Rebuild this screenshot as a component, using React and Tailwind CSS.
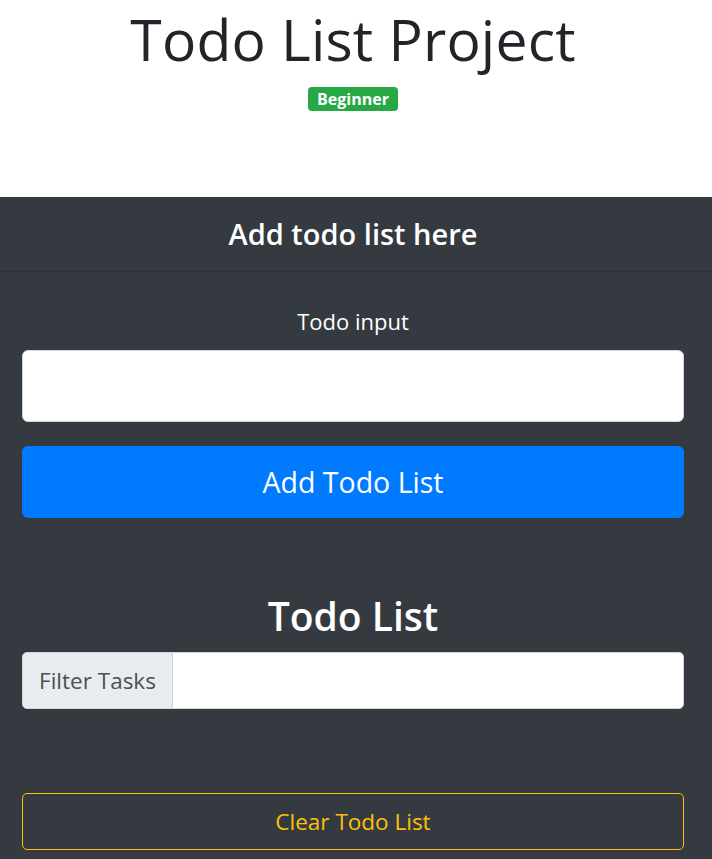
export default function App() {
  return (
    <div className="min-h-[859px] bg-white font-['Open_Sans',sans-serif]">
      <div className="flex h-[197px] flex-col items-center pr-[6px]">
        <h1 className="text-[57px] leading-[78px] font-normal tracking-[0.2px] text-[#212529]">Todo List Project</h1>
        <span className="mt-[9px] flex h-[24px] items-center rounded-[4px] bg-[#28a745] px-[9px] text-[16px] font-bold text-white">
          Beginner
        </span>
      </div>

      <div className="bg-[#343a40] text-white">
        <div className="flex h-[75px] items-center justify-center border-b border-[#2c3136] pr-[6px]">
          <h3 className="text-[29px] font-semibold">Add todo list here</h3>
        </div>
        <div className="flex flex-col pt-[34px] pr-[28px] pb-[10px] pl-[22px]">
          <label className="text-center text-[22px] leading-[30px]">Todo input</label>
          <input
            type="text"
            className="mt-[14px] h-[72px] w-full rounded-[6px] border border-[#ced4da] bg-white px-4 text-[20px] text-[#495057] outline-none"
          />
          <button className="mt-[24px] h-[72px] w-full rounded-[6px] bg-[#007bff] text-[28.5px] text-white">
            Add Todo List
          </button>

          <h2 className="mt-[68px] text-center text-[39px] leading-[60px] font-semibold">Todo List</h2>
          <div className="mt-[6px] flex h-[57px] w-full overflow-hidden rounded-[5px] border border-[#ced4da] bg-white">
            <span className="flex w-[150px] items-center justify-center border-r border-[#ced4da] bg-[#e9ecef] text-[22.5px] text-[#495057]">
              Filter Tasks
            </span>
            <input type="text" className="flex-1 px-3 text-[20px] text-[#495057] outline-none" />
          </div>

          <button className="mt-[84px] h-[57px] w-full rounded-[5px] border border-[#ffc107] bg-transparent text-[22.5px] text-[#ffc107]">
            Clear Todo List
          </button>
        </div>
      </div>
    </div>
  );
}
